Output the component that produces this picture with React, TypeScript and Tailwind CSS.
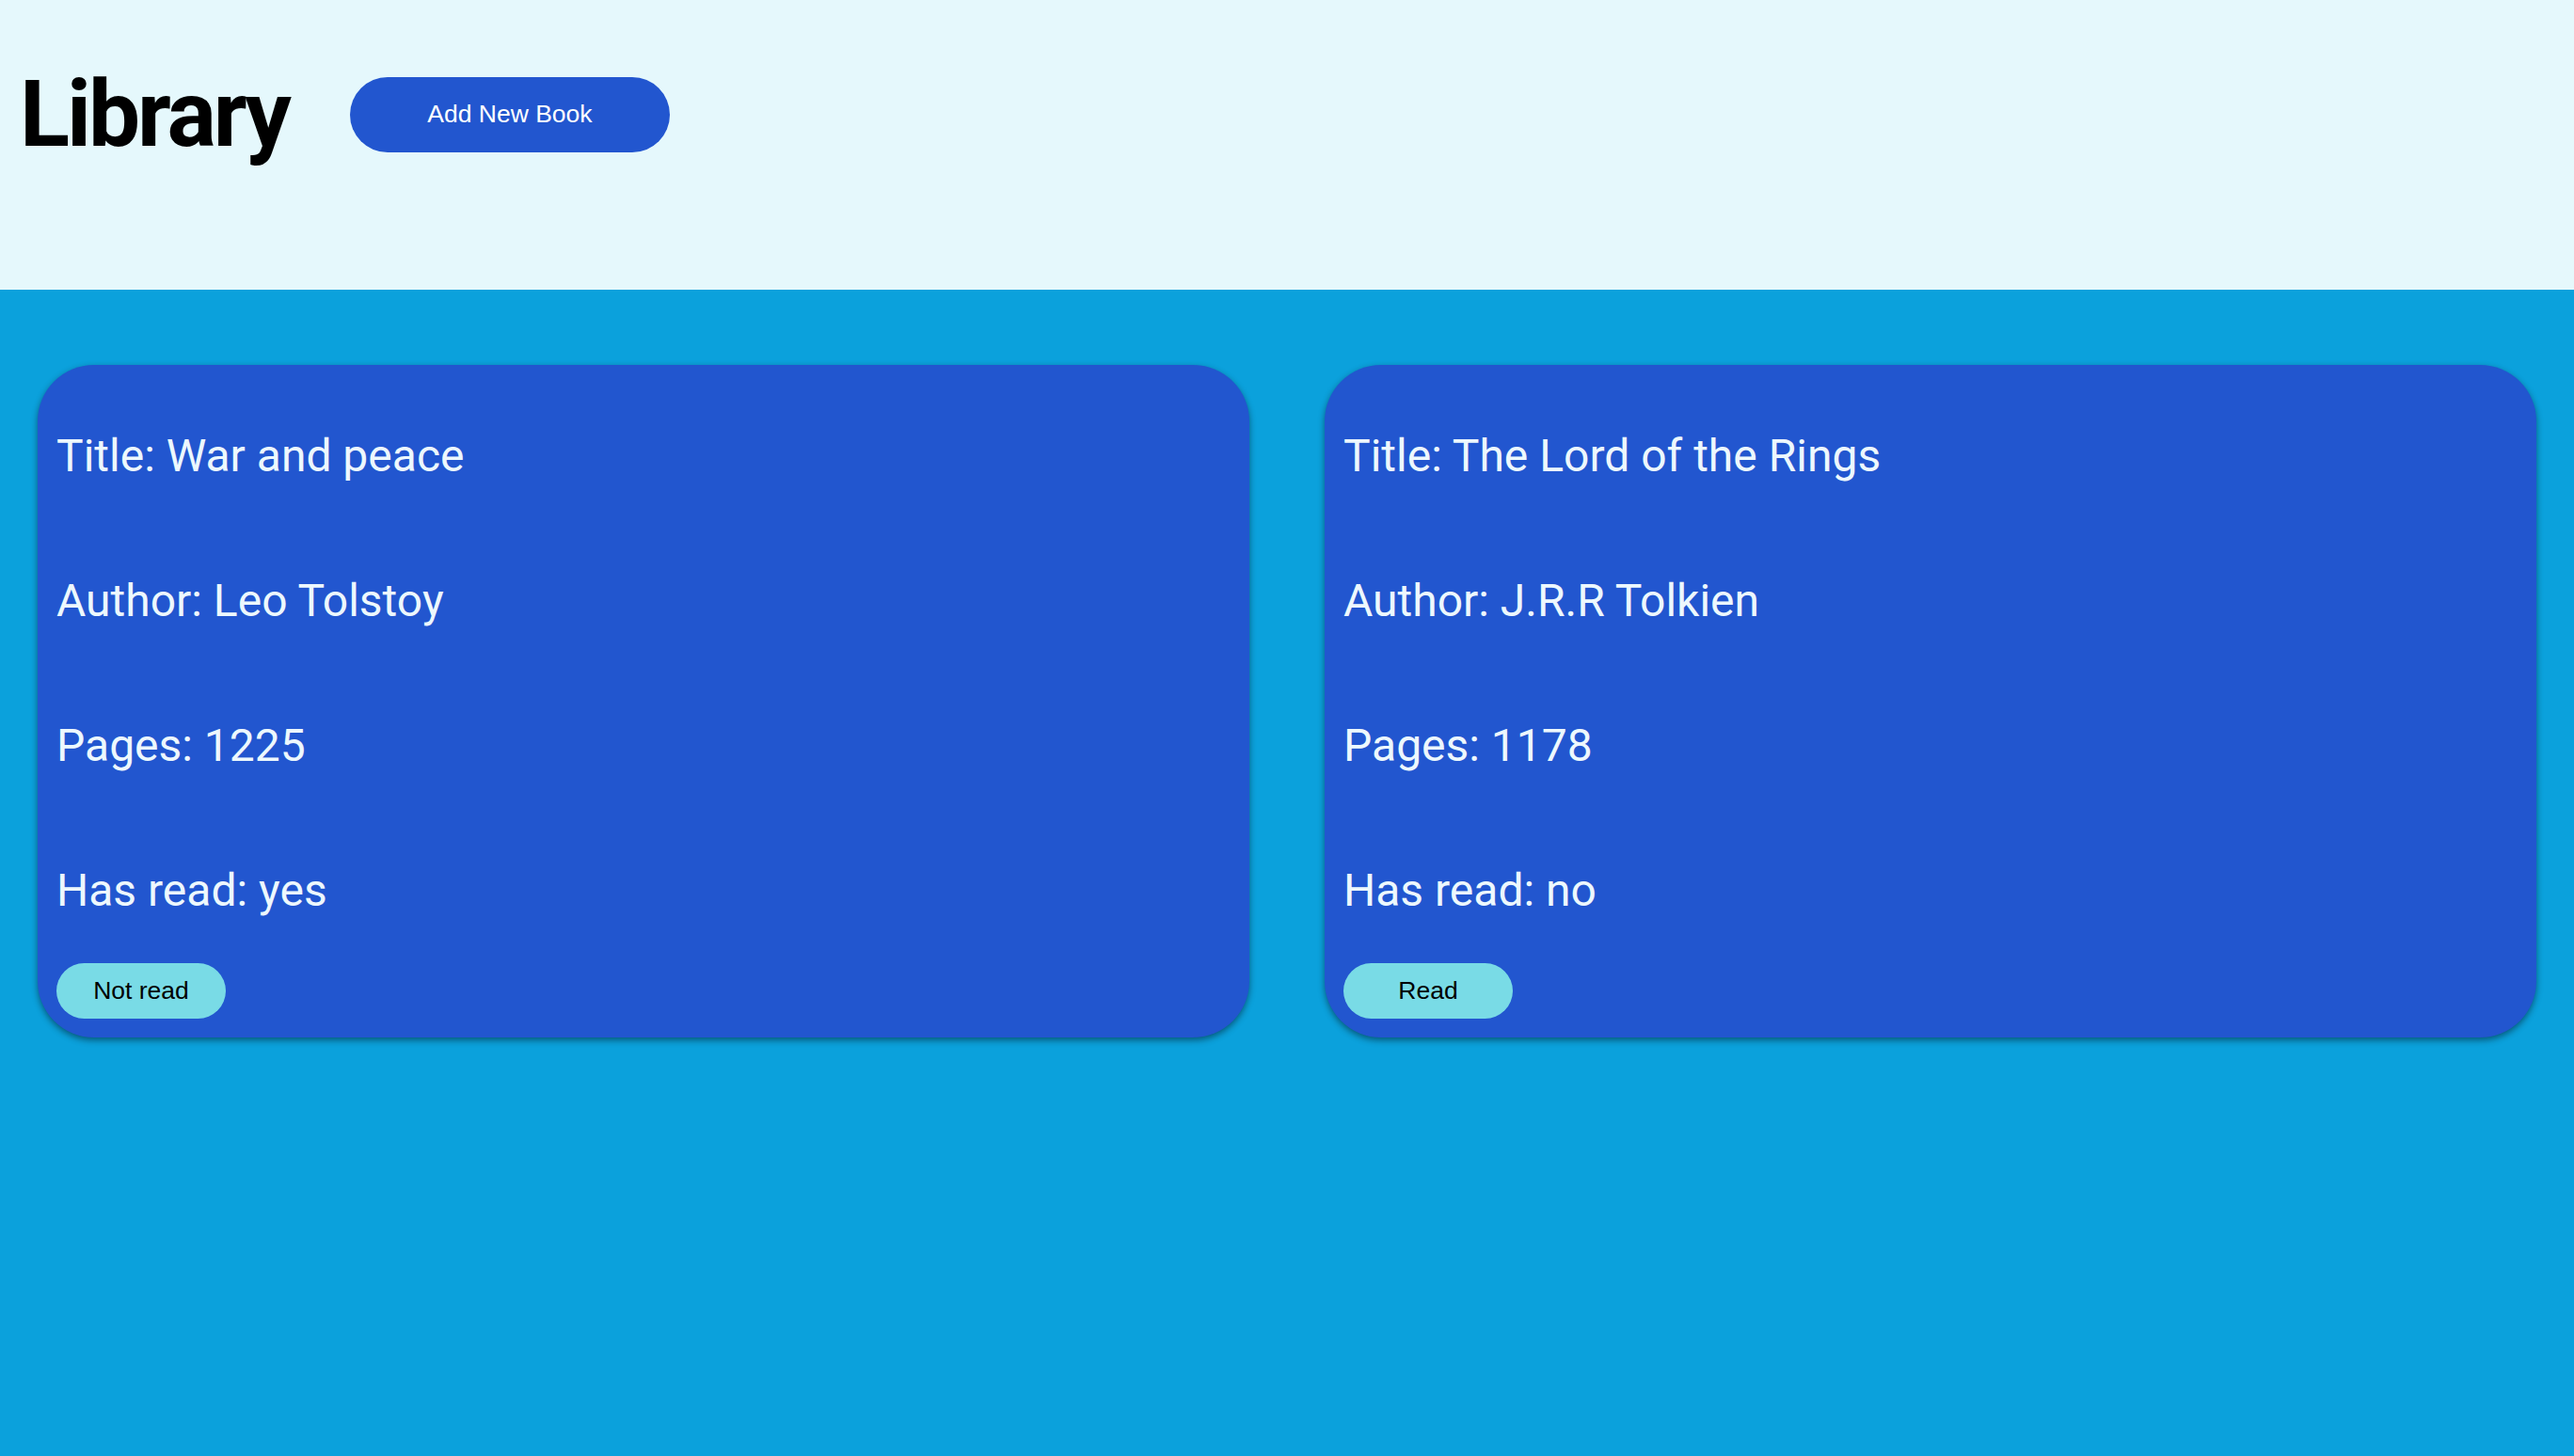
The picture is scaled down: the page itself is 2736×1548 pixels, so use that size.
import React from "react";

type Book = {
    title: string;
    author: string;
    pages: number;
    read: boolean;
};

const books: Book[] = [
    { title: "War and peace", author: "Leo Tolstoy", pages: 1225, read: true },
    { title: "The Lord of the Rings", author: "J.R.R Tolkien", pages: 1178, read: false },
];

function BookCard({ book }: { book: Book }) {
    return (
        <div className="flex flex-col items-start p-[20px] rounded-[60px] bg-[#2256cf] shadow-[0_3px_7px_rgba(0,0,0,0.45)] text-[#edf8fd] font-['Roboto',sans-serif]">
            <p className="my-[48px] text-[48px] leading-[58px]">Title: {book.title}</p>
            <p className="my-[48px] text-[48px] leading-[58px]">Author: {book.author}</p>
            <p className="my-[48px] text-[48px] leading-[58px]">Pages: {book.pages}</p>
            <p className="my-[48px] text-[48px] leading-[58px]">Has read: {book.read ? "yes" : "no"}</p>
            <button className="w-[180px] h-[59px] rounded-full bg-[#79dbe6] text-black text-[26.5px] font-['Liberation_Sans',Arial,sans-serif]">
                {book.read ? "Not read" : "Read"}
            </button>
        </div>
    );
}

export default function App() {
    return (
        <div className="min-h-screen flex flex-col bg-[#0ba1dc]">
            {/* Header */}
            <header className="h-[308px] shrink-0 bg-[#e5f8fc] pt-[64px] pl-[21px]">
                <div className="flex items-center gap-[65px]">
                    <h1 className="text-[98px] leading-[115px] font-bold tracking-[-3px] text-black font-['Roboto',sans-serif]">
                        Library
                    </h1>
                    <button className="w-[340px] h-[80px] rounded-full bg-[#2256cf] text-white text-[26.5px] font-['Liberation_Sans',Arial,sans-serif]">
                        Add New Book
                    </button>
                </div>
            </header>

            {/* Books */}
            <main className="flex-1 grid grid-cols-2 gap-x-[80px] content-start px-[40px] pt-[80px]">
                {books.map((book) => (
                    <BookCard key={book.title} book={book} />
                ))}
            </main>
        </div>
    );
}
